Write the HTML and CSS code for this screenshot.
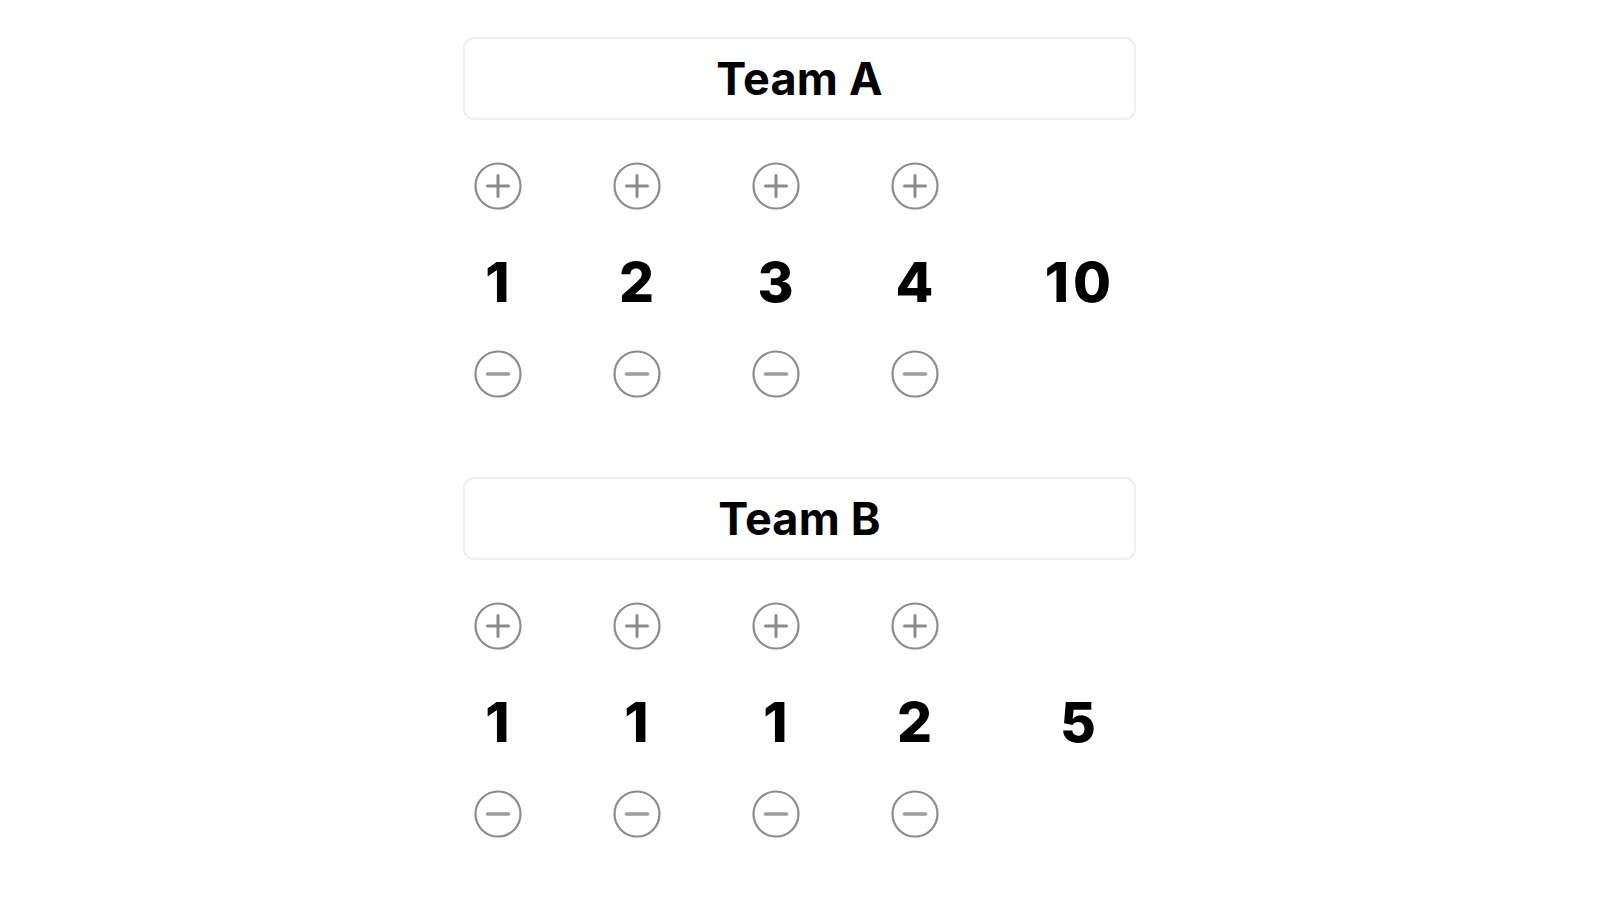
FILE: index.html
```html
<!DOCTYPE html>
<html lang="en">
<head>
<meta charset="utf-8">
<title>Scoreboard</title>
<link rel="stylesheet" href="styles.css">
</head>
<body>
<main class="board">
  <section class="team">
    <div class="team-name">Team A</div>
    <div class="scores">
      <div class="col">
        <button class="btn" aria-label="Increase"><svg viewBox="0 0 48 48"><circle cx="24" cy="24" r="22.5"/><path d="M24 13.5v21M13.5 24h21"/></svg></button>
        <div class="num">1</div>
        <button class="btn" aria-label="Decrease"><svg viewBox="0 0 48 48"><circle cx="24" cy="24" r="22.5"/><path class="minus" d="M13.5 24h21"/></svg></button>
      </div>
      <div class="col">
        <button class="btn" aria-label="Increase"><svg viewBox="0 0 48 48"><circle cx="24" cy="24" r="22.5"/><path d="M24 13.5v21M13.5 24h21"/></svg></button>
        <div class="num">2</div>
        <button class="btn" aria-label="Decrease"><svg viewBox="0 0 48 48"><circle cx="24" cy="24" r="22.5"/><path class="minus" d="M13.5 24h21"/></svg></button>
      </div>
      <div class="col">
        <button class="btn" aria-label="Increase"><svg viewBox="0 0 48 48"><circle cx="24" cy="24" r="22.5"/><path d="M24 13.5v21M13.5 24h21"/></svg></button>
        <div class="num">3</div>
        <button class="btn" aria-label="Decrease"><svg viewBox="0 0 48 48"><circle cx="24" cy="24" r="22.5"/><path class="minus" d="M13.5 24h21"/></svg></button>
      </div>
      <div class="col">
        <button class="btn" aria-label="Increase"><svg viewBox="0 0 48 48"><circle cx="24" cy="24" r="22.5"/><path d="M24 13.5v21M13.5 24h21"/></svg></button>
        <div class="num">4</div>
        <button class="btn" aria-label="Decrease"><svg viewBox="0 0 48 48"><circle cx="24" cy="24" r="22.5"/><path class="minus" d="M13.5 24h21"/></svg></button>
      </div>
      <div class="col total">
        <div class="num">10</div>
      </div>
    </div>
  </section>

  <section class="team">
    <div class="team-name">Team B</div>
    <div class="scores">
      <div class="col">
        <button class="btn" aria-label="Increase"><svg viewBox="0 0 48 48"><circle cx="24" cy="24" r="22.5"/><path d="M24 13.5v21M13.5 24h21"/></svg></button>
        <div class="num">1</div>
        <button class="btn" aria-label="Decrease"><svg viewBox="0 0 48 48"><circle cx="24" cy="24" r="22.5"/><path class="minus" d="M13.5 24h21"/></svg></button>
      </div>
      <div class="col">
        <button class="btn" aria-label="Increase"><svg viewBox="0 0 48 48"><circle cx="24" cy="24" r="22.5"/><path d="M24 13.5v21M13.5 24h21"/></svg></button>
        <div class="num">1</div>
        <button class="btn" aria-label="Decrease"><svg viewBox="0 0 48 48"><circle cx="24" cy="24" r="22.5"/><path class="minus" d="M13.5 24h21"/></svg></button>
      </div>
      <div class="col">
        <button class="btn" aria-label="Increase"><svg viewBox="0 0 48 48"><circle cx="24" cy="24" r="22.5"/><path d="M24 13.5v21M13.5 24h21"/></svg></button>
        <div class="num">1</div>
        <button class="btn" aria-label="Decrease"><svg viewBox="0 0 48 48"><circle cx="24" cy="24" r="22.5"/><path class="minus" d="M13.5 24h21"/></svg></button>
      </div>
      <div class="col">
        <button class="btn" aria-label="Increase"><svg viewBox="0 0 48 48"><circle cx="24" cy="24" r="22.5"/><path d="M24 13.5v21M13.5 24h21"/></svg></button>
        <div class="num">2</div>
        <button class="btn" aria-label="Decrease"><svg viewBox="0 0 48 48"><circle cx="24" cy="24" r="22.5"/><path class="minus" d="M13.5 24h21"/></svg></button>
      </div>
      <div class="col total">
        <div class="num">5</div>
      </div>
    </div>
  </section>
</main>
</body>
</html>
```

FILE: styles.css
```css
html, body {
  margin: 0;
  padding: 0;
  background: #ffffff;
}

body {
  font-family: Inter, "Liberation Sans", Arial, sans-serif;
  color: #000000;
}

.board {
  width: 673px;
  margin: 37px auto 0;
  display: flex;
  flex-direction: column;
  gap: 79px;
}

.team {
  display: flex;
  flex-direction: column;
  gap: 42px;
}

.team-name {
  box-sizing: border-box;
  height: 83px;
  border: 2px solid #eeeeee;
  border-radius: 11px;
  display: flex;
  align-items: center;
  justify-content: center;
  font-size: 45px;
  font-weight: 700;
  letter-spacing: 0.2px;
}

.scores {
  display: grid;
  grid-template-columns: repeat(4, 49px) 1fr;
  column-gap: 90px;
  padding: 0 9px 0 10px;
}

.col {
  display: flex;
  flex-direction: column;
  align-items: center;
  gap: 35px;
}

.col.total {
  justify-content: center;
}

.btn {
  width: 49px;
  height: 48px;
  padding: 0;
  margin: 0;
  border: 0;
  background: none;
  display: block;
}

.btn svg {
  display: block;
  width: 48px;
  height: 48px;
  margin: 0 auto;
  fill: none;
  stroke: #8c8c8c;
  stroke-width: 2.2;
}

.btn svg path {
  stroke: #8a8a8a;
  stroke-width: 3;
  stroke-linecap: round;
}

.btn svg path.minus {
  stroke: #9c9c9c;
  stroke-width: 3.6;
}

.num {
  box-sizing: border-box;
  height: 70px;
  line-height: 70px;
  padding-top: 2px;
  padding-left: 4px;
  font-size: 55px;
  font-weight: 800;
  letter-spacing: 4px;
  text-align: center;
  white-space: nowrap;
}
```
